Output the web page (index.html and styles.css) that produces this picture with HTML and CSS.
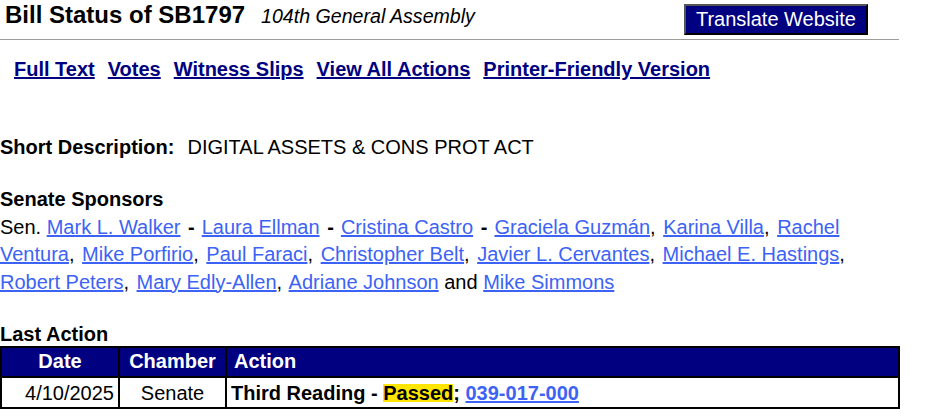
FILE: index.html
```html
<!DOCTYPE html>
<html lang="en">
<head>
    <meta charset="UTF-8">
    <meta name="viewport" content="width=device-width, initial-scale=1.0">
    <title>Bill Status of SB1797</title>
    <link rel="stylesheet" href="styles.css">
</head>
<body>
<div class="page">

    <!-- Title bar -->
    <div class="top-bar">
        <h1 class="bill-title">Bill Status of SB1797<span class="assembly">104th General Assembly</span></h1>
        <button class="translate-btn">Translate Website</button>
    </div>

    <!-- Bill links -->
    <div class="bill-links">
        <a href="#">Full Text</a>
        <a href="#">Votes</a>
        <a href="#">Witness Slips</a>
        <a href="#">View All Actions</a>
        <a href="#">Printer-Friendly Version</a>
    </div>

    <p class="short-desc"><b>Short Description:</b><span class="desc-text">DIGITAL ASSETS &amp; CONS PROT ACT</span></p>

    <h2 class="section-head">Senate Sponsors</h2>
    <p class="sponsors">Sen. <a href="#">Mark L. Walker</a> <span class="dash">-</span> <a href="#">Laura Ellman</a> <span class="dash">-</span> <a href="#">Cristina Castro</a> <span class="dash">-</span> <a href="#">Graciela Guzmán</a><span class="comma">,</span> <a href="#">Karina Villa</a><span class="comma">,</span> <a href="#">Rachel Ventura</a><span class="comma">,</span> <a href="#">Mike Porfirio</a><span class="comma">,</span> <a href="#">Paul Faraci</a><span class="comma">,</span> <a href="#">Christopher Belt</a><span class="comma">,</span> <a href="#">Javier L. Cervantes</a><span class="comma">,</span> <a href="#">Michael E. Hastings</a><span class="comma">,</span> <a href="#">Robert Peters</a><span class="comma">,</span> <a href="#">Mary Edly-Allen</a><span class="comma">,</span> <a href="#">Adriane Johnson</a> and <a href="#">Mike Simmons</a></p>

    <h2 class="section-head last-head">Last Action</h2>
    <table class="action-table">
        <tr>
            <th class="col-date">Date</th>
            <th class="col-chamber">Chamber</th>
            <th class="col-action">Action</th>
        </tr>
        <tr>
            <td class="col-date">4/10/2025</td>
            <td class="col-chamber">Senate</td>
            <td class="col-action">Third Reading - <span class="passed">Passed</span>; <a href="#">039-017-000</a></td>
        </tr>
    </table>

</div>
</body>
</html>
```

FILE: styles.css
```css
body {
    margin: 0;
    padding: 0;
    background-color: #fff;
    color: #000;
    font-family: "Liberation Sans", Arial, sans-serif;
    font-size: 20px;
}

.page {
    width: 900px;
}

/* Title bar */
.top-bar {
    display: flex;
    justify-content: space-between;
    align-items: flex-start;
    width: 899px;
    height: 40px;
    box-sizing: border-box;
    padding: 0 31px 0 5px;
    border-bottom: 1px solid #9c9c9c;
}

.bill-title {
    margin: 0;
    padding-top: 1px;
    font-size: 24px;
    line-height: 28px;
    font-weight: bold;
}

.assembly {
    margin-left: 16px;
    font-size: 19.6px;
    font-weight: normal;
    font-style: italic;
}

.translate-btn {
    margin-top: 4px;
    height: 31px;
    padding: 0 10px;
    background-color: #000080;
    color: #fff;
    font-family: inherit;
    font-size: 20px;
    border: 2px solid;
    border-color: #555 #000 #000 #555;
    cursor: pointer;
}

/* Bill links */
.bill-links {
    display: flex;
    gap: 13px;
    margin-top: 17px;
    padding-left: 14px;
    line-height: 24px;
    font-weight: bold;
}

.bill-links a {
    color: #000080;
}

/* Body text */
.short-desc {
    margin: 53px 0 0;
    line-height: 27.5px;
}

.desc-text {
    margin-left: 13px;
}

.section-head {
    margin: 24.5px 0 0;
    font-size: 20px;
    line-height: 27.5px;
}

.sponsors {
    margin: 0;
    line-height: 27.5px;
}

.sponsors a {
    color: #3c63f5;
}

.sponsors .dash {
    margin: 0 1.5px 0 2px;
    font-weight: bold;
}

.sponsors .comma {
    margin-right: 2px;
}

.last-head {
    margin-top: 26px;
    line-height: 24px;
}

/* Last action table */
.action-table {
    width: 900px;
    border-collapse: collapse;
    table-layout: fixed;
    border: 2px solid #000;
}

.action-table th,
.action-table td {
    box-sizing: border-box;
    border: 2px solid #000;
    line-height: 24px;
    font-size: 20px;
}

.action-table th {
    padding: 1px 4px 3px;
    background-color: #000080;
    color: #fff;
    font-weight: bold;
}

.action-table td {
    padding: 3px 4px 2px;
}

.col-date {
    width: 118px;
}

.col-chamber {
    width: 107px;
    text-align: center;
}

td.col-date {
    text-align: right;
}

th.col-action {
    text-align: left;
    padding-left: 7px;
}

td.col-action {
    padding-left: 4px;
    font-weight: bold;
}

td.col-action a {
    color: #3c63f5;
}

.passed {
    display: inline-block;
    line-height: 18px;
    background-color: #ffe500;
}
```
